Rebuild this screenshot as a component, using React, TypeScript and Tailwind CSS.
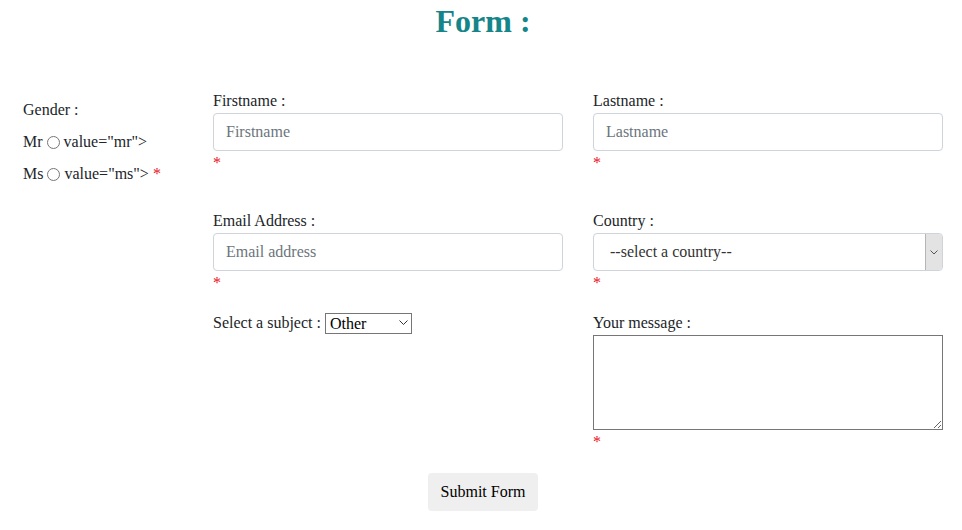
import React from 'react'

const serif = { fontFamily: '"Liberation Serif", "Times New Roman", serif' }

function Star() {
  return <span className="text-[#e8101c]">*</span>
}

function Field({ label, placeholder }: { label: string; placeholder: string }) {
  return (
    <div className="flex flex-col">
      <label className="leading-6">{label}</label>
      <input
        placeholder={placeholder}
        className="h-[38px] w-full rounded-[4px] border border-[#ced4da] bg-white px-3 text-base text-[#495057] outline-none placeholder:text-[#6c757d]"
        style={serif}
      />
      <div className="leading-6">
        <Star />
      </div>
    </div>
  )
}

export default function App() {
  return (
    <div className="min-h-[530px] bg-white text-base text-[#212529]" style={serif}>
      <h1 className="pl-[4px] pt-[2px] text-center text-[32px] font-bold leading-[38px] text-[#158589]">Form :</h1>

      <form className="mt-[49px] flex pl-[23px]">
        {/* gender */}
        <div className="w-[190px] pt-[5px] leading-8">
          <div>Gender :</div>
          <div className="flex items-center">
            Mr <input type="radio" name="g" className="mx-[4px] size-[13px]" /> value="mr"&gt;
          </div>
          <div className="flex items-center">
            Ms <input type="radio" name="g" className="mx-[4px] size-[13px]" /> value="ms"&gt;&nbsp;
            <Star />
          </div>
        </div>

        <div className="grid w-[730px] grid-cols-[350px_350px] gap-x-[30px]">
          <Field label="Firstname :" placeholder="Firstname" />
          <Field label="Lastname :" placeholder="Lastname" />

          <div className="mt-[34px]">
            <Field label="Email Address :" placeholder="Email address" />
          </div>
          <div className="mt-[34px] flex flex-col">
            <label className="leading-6">Country :</label>
            <div className="relative h-[38px] rounded-[4px] border border-[#ced4da] bg-white">
              <select
                className="h-full w-full appearance-none bg-transparent pl-4 text-base text-[#333] outline-none"
                style={serif}
              >
                <option>--select a country--</option>
              </select>
              <div className="pointer-events-none absolute right-0 top-0 flex h-full w-[17px] items-center justify-center rounded-r-[3px] border-l border-[#b5b5b5] bg-[#e3e3e3]">
                <svg width="8" height="5" viewBox="0 0 8 5" fill="none">
                  <path d="M0.5 0.5L4 4L7.5 0.5" stroke="#555" strokeWidth="1" />
                </svg>
              </div>
            </div>
            <div className="leading-6">
              <Star />
            </div>
          </div>

          <div className="mt-4 leading-6">
            <label>Select a subject : </label>
            <span className="relative inline-block align-middle">
              <select
                defaultValue="Other"
                className="h-[21px] w-[87px] appearance-none border border-[#767676] bg-white pl-1 text-base leading-[19px] text-black outline-none"
                style={serif}
              >
                <option>Other</option>
              </select>
              <svg
                className="pointer-events-none absolute right-[4px] top-[8px]"
                width="9"
                height="5"
                viewBox="0 0 9 5"
                fill="none"
              >
                <path d="M0.5 0.5L4.5 4.5L8.5 0.5" stroke="#333" strokeWidth="1" />
              </svg>
            </span>
          </div>
          <div className="mt-4 flex flex-col">
            <label className="leading-6">Your message :</label>
            <textarea className="h-[95px] w-full border border-[#767676] bg-white outline-none" />
            <div className="leading-6">
              <Star />
            </div>
          </div>
        </div>
      </form>

      <div className="mt-[19px] flex justify-center pl-[4px]">
        <button
          type="button"
          className="h-[38px] w-[110px] rounded-[4px] bg-[#efefef] text-base text-black"
          style={serif}
        >
          Submit Form
        </button>
      </div>
    </div>
  )
}
